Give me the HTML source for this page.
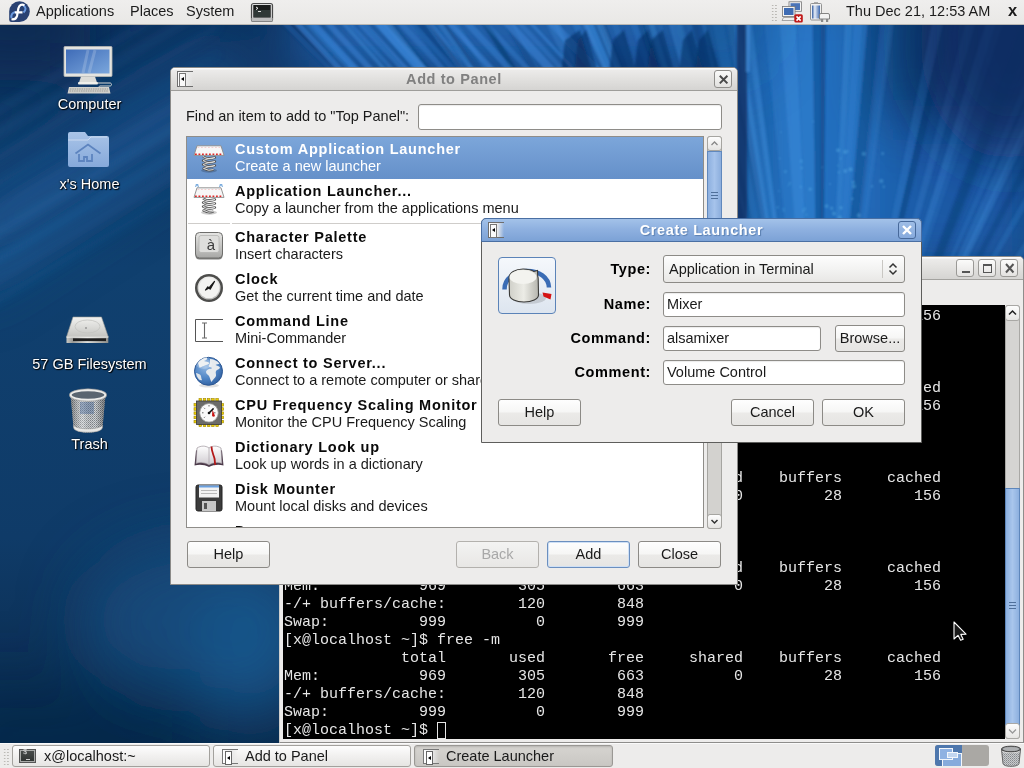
<!DOCTYPE html>
<html><head><meta charset="utf-8">
<style>
*{box-sizing:border-box;margin:0;padding:0}
html,body{width:1024px;height:768px;overflow:hidden}
body{will-change:transform;position:relative;font-family:"Liberation Sans",sans-serif;font-size:14.5px;color:#1a1a1a;background:#0e3561}
.abs{position:absolute}
#wall{position:absolute;left:0;top:0;width:1024px;height:768px;overflow:hidden;background:#0f3a6a}
#toppanel{position:absolute;left:0;top:0;width:1024px;height:25px;background:linear-gradient(#efeeed,#e9e8e6);border-bottom:1px solid #b8b6b2}
#toppanel .t{position:absolute;top:3px;font-size:14.5px;color:#1c1c1c;white-space:nowrap}
.dlabel{position:absolute;width:170px;text-align:center;color:#fff;font-size:14.5px;text-shadow:1px 1px 1px #000,0 0 2px #000;white-space:nowrap}

#term{position:absolute;left:279px;top:256px;width:745px;height:487px;background:#edeceb;border:1px solid #8e8d8b;border-left-color:#cfcecc;border-radius:5px 5px 0 0}
#term-title{position:absolute;left:0;top:0;width:100%;height:23px;background:linear-gradient(#fbfbfb,#fbfbfb 1px,#ecebea 2px,#e3e2e0 45%,#d5d4d2);border-bottom:1px solid #a3a29f;border-radius:4px 4px 0 0}
.tbtn{position:absolute;top:2px;width:18px;height:18px;border:1px solid #9a9996;border-radius:3px;background:linear-gradient(#fbfbfa,#e4e3e1)}
#term-menu{position:absolute;left:0;top:23px;width:100%;height:25px;background:#edeceb}
#term-screen{position:absolute;left:3px;top:48px;width:722px;height:434px;background:#000;overflow:hidden}
#term-screen pre{position:absolute;left:1px;top:3px;font-family:"Liberation Mono",monospace;font-size:15px;line-height:18px;color:#e6e6e6;white-space:pre}
.cur{outline:1px solid #e6e6e6;outline-offset:-1px}
#term-sb{position:absolute;left:725px;top:48px;width:15px;height:434px;background:#d5d4d2;border:1px solid #a9a8a5;border-radius:3px}
.sb-up,.sb-dn{position:absolute;left:-1px;width:15px;height:16px;border:1px solid #a9a8a5;border-radius:3px;background:linear-gradient(#fdfdfd,#e6e5e3)}
.sb-up{top:-1px}.sb-dn{bottom:-1px}
.sb-thumb{position:absolute;left:-1px;width:15px;top:182px;height:238px;border:1px solid #5f87bb;background:linear-gradient(90deg,#8cb0e0,#a9c6ec 50%,#8db0df)}
.win{position:absolute;background:#edeceb;border:1px solid #8b8a88;border-radius:5px 5px 0 0}
.wtitle{position:absolute;left:0;top:0;width:100%;height:23px;background:linear-gradient(#fbfbfb,#fbfbfb 1px,#ecebea 2px,#e3e2e0 45%,#d5d4d2);border-bottom:1px solid #9e9d9a;border-radius:4px 4px 0 0}
.active>.wtitle{background:linear-gradient(#a3c2e9,#8fb1e0 45%,#7ca2d6);border-bottom:1px solid #4a72a8}
.active{border-color:#5e5e5c}
.active>.wtitle{left:-1px;top:-1px;width:calc(100% + 2px);height:24px;border:1px solid #4a6fa3;border-radius:5px 5px 0 0}
.wicon{position:absolute;left:6px;top:3px;width:16px;height:16px;border:1px solid #6e6e6e;border-right:none;background:linear-gradient(90deg,#fff,#ececec 55%,rgba(236,236,236,0))}
.wicon:before{content:"";position:absolute;left:1px;top:1px;width:5px;height:12px;border:1px solid #777;background:#fafafa}
.wicon:after{content:"";position:absolute;left:3px;top:5px;width:0;height:0;border-top:2px solid transparent;border-bottom:2px solid transparent;border-right:3px solid #000}
.wtext{position:absolute;left:0;top:3px;width:100%;text-align:center;font-weight:bold;color:#808080;font-size:14.5px;letter-spacing:.6px}
.active .wtext{color:#fff;text-shadow:1px 1px 1px #5a7fb0}
.wclose{position:absolute;top:2px;width:18px;height:18px;border:1px solid #8f8e8b;border-radius:3px;background:linear-gradient(#fafaf9,#e2e1df)}
.wclose svg{position:absolute;left:0;top:0}
.active .wclose{border-color:#47699a;background:linear-gradient(#9ebde6,#86aadd)}
.lbl{position:absolute;white-space:nowrap;font-size:14.5px;color:#1a1a1a}
.entry{position:absolute;background:#fff;border:1px solid #8e8c88;border-radius:3px;box-shadow:inset 0 1px 1px rgba(0,0,0,.08);font-size:14.5px;white-space:nowrap;padding-left:3px;line-height:23px;color:#1a1a1a}
.btn{position:absolute;height:27px;border:1px solid #8c8a86;border-radius:3px;background:linear-gradient(#fefefe,#f6f6f5 48%,#ebeae8 52%,#e6e5e3);text-align:center;line-height:25px;font-size:14.5px;color:#1a1a1a;white-space:nowrap}
.btn.dis{color:#a8a8a8;border-color:#b3b1ad;background:linear-gradient(#f3f3f2,#e8e7e5)}
.btn.def{border-color:#6b8fbf;box-shadow:inset 0 0 0 1px #cfe0f5}
#atplist{position:absolute;left:15px;top:68px;width:518px;height:392px;background:#fff;border:1px solid #8f8d89;overflow:hidden}
.row{position:absolute;left:0;width:516px;height:42px}
.row.sel{background:linear-gradient(#7ca6da,#6590c9);color:#fff}
.ric{position:absolute;left:6px;top:5px}
.rt{position:absolute;left:48px;top:4px;font-weight:bold;color:#0a0a0a;font-size:14.5px;letter-spacing:.75px;white-space:nowrap}
.rd{position:absolute;left:48px;top:21px;font-size:14.5px;white-space:nowrap}
.row.sel .rt,.row.sel .rd{color:#fff}
.sep{position:absolute;height:1px;background:#cfcdca}
.vsb{position:absolute;width:15px;background:#d3d2cf;border:1px solid #a6a5a1;border-radius:3px}
.sb-up2,.sb-dn2{position:absolute;left:-1px;width:15px;height:15px;border:1px solid #a6a5a1;border-radius:3px;background:linear-gradient(#fdfdfd,#e5e4e2)}
.sb-up2 svg,.sb-dn2 svg{position:absolute;left:0;top:0}
.sb-up2{top:-1px}.sb-dn2{bottom:-1px}
.sb-thumb2{position:absolute;left:-1px;width:15px;border:1px solid #6088bd;background:linear-gradient(90deg,#8db0df,#a6c3eb 50%,#8caedd)}
.grip{position:absolute;left:3px;width:7px;height:7px;border-top:1px solid #4f6f9a;border-bottom:1px solid #4f6f9a}
.grip:after{content:"";position:absolute;left:0;top:2px;width:7px;height:1px;background:#4f6f9a}
.lbl.b{font-weight:bold;letter-spacing:.6px;color:#000}
.iconbtn{position:absolute;border:1px solid #5b83b8;border-radius:4px;background:linear-gradient(#f5f8fc,#dde5ef)}
.combo{position:absolute;border:1px solid #8c8a86;border-radius:3px;background:linear-gradient(#fdfdfd,#f3f3f2 50%,#e8e7e5);font-size:14.5px;line-height:26px;padding-left:5px;white-space:nowrap;color:#1a1a1a}
.csep{position:absolute;left:218px;top:4px;width:1px;height:18px;background:#c9c7c3}
#botpanel{position:absolute;left:0;top:743px;width:1024px;height:25px;background:#edeceb;border-top:1px solid #fafafa}
.handle{position:absolute;width:7px;height:18px;background-image:radial-gradient(circle at 1.5px 1.5px,#bcbab6 .8px,transparent 1px);background-size:3.3px 3px}
.task{position:absolute;top:1px;height:22px;border:1px solid #a3a19d;border-radius:3px;background:linear-gradient(#fdfdfd,#f1f0ef 50%,#e6e5e3)}
.task.act{background:linear-gradient(#d6d4d0,#c9c7c3);border-color:#9a9894;box-shadow:inset 0 1px 2px rgba(0,0,0,.15)}
.task span{position:absolute;top:2px;font-size:14.5px;color:#1a1a1a;white-space:nowrap}
.ticon{position:absolute;left:6px;top:3px;width:17px;height:14px}
.termico{border:1px solid #555;background:linear-gradient(#4a4e4c,#2e3230);box-shadow:inset 0 0 0 1px #a8aaa8}
.termico:before{content:"$";position:absolute;left:3px;top:-2px;font-size:7px;color:#ddd;font-family:"Liberation Mono"}
.termico:after{content:"";position:absolute;left:6px;top:9px;width:4px;height:1px;background:#ccc}
.wico{border:1px solid #777;border-right:none;width:16px;height:15px;top:3px;left:8px;background:linear-gradient(90deg,#fff,#e8e8e8 55%,rgba(230,230,230,0))}
.wico:before{content:"";position:absolute;left:2px;top:1px;width:5px;height:12px;border:1px solid #666;background:#fff}
.wico:after{content:"";position:absolute;left:4px;top:6px;width:0;height:0;border-top:2px solid transparent;border-bottom:2px solid transparent;border-right:3px solid #000}
</style></head><body>
<svg width="0" height="0" style="position:absolute"><defs>
<linearGradient id="gkey" x1="0" y1="0" x2="0" y2="1"><stop offset="0" stop-color="#f0f0ee"/><stop offset="1" stop-color="#b8b8b6"/></linearGradient>
<radialGradient id="gglobe" cx=".4" cy=".35" r=".75"><stop offset="0" stop-color="#8fb6e2"/><stop offset=".55" stop-color="#4f84c4"/><stop offset="1" stop-color="#2a5898"/></radialGradient>
<linearGradient id="gknob" x1="0" y1="0" x2="1" y2="0"><stop offset="0" stop-color="#cfcfc8"/><stop offset=".5" stop-color="#ececE6"/><stop offset="1" stop-color="#b5b5ae"/></linearGradient>
<linearGradient id="gscreen" x1="0" y1="0" x2="1" y2="1"><stop offset="0" stop-color="#3f6cb8"/><stop offset="1" stop-color="#7aa6dc"/></linearGradient>
<linearGradient id="gfolder" x1="0" y1="0" x2="0" y2="1"><stop offset="0" stop-color="#a9c4e8"/><stop offset="1" stop-color="#86a9da"/></linearGradient>
<linearGradient id="ghdd" x1="0" y1="0" x2="0" y2="1"><stop offset="0" stop-color="#f2f2f0"/><stop offset="1" stop-color="#c4c4c0"/></linearGradient>
<linearGradient id="gtrash" x1="0" y1="0" x2="1" y2="0"><stop offset="0" stop-color="#9aa0a4"/><stop offset=".4" stop-color="#e8eaec"/><stop offset="1" stop-color="#8e9296"/></linearGradient>
<linearGradient id="gbatt" x1="0" y1="0" x2="1" y2="0"><stop offset="0" stop-color="#2f5aa0"/><stop offset=".35" stop-color="#e8eef8"/><stop offset="1" stop-color="#3a66ad"/></linearGradient>
<linearGradient id="gkey2" x1="0" y1="0" x2="0" y2="1"><stop offset="0" stop-color="#e6e6e4"/><stop offset="1" stop-color="#a8a8a6"/></linearGradient>
<linearGradient id="gpage" x1="0" y1="0" x2="0" y2="1"><stop offset="0" stop-color="#ffffff"/><stop offset="1" stop-color="#cfcbd0"/></linearGradient>
<linearGradient id="ghddf" x1="0" y1="0" x2="1" y2="0"><stop offset="0" stop-color="#c8c8c4"/><stop offset=".15" stop-color="#9a9a96"/><stop offset=".5" stop-color="#e0e0dc"/><stop offset="1" stop-color="#8e8e8a"/></linearGradient>
</defs></svg>
<div id="wall"><svg width="1024" height="768" viewBox="0 0 1024 768" style="position:absolute;left:0;top:0">
<defs>
<filter id="b30" x="-50%" y="-50%" width="200%" height="200%"><feGaussianBlur stdDeviation="30"/></filter>
<filter id="b12" x="-50%" y="-50%" width="200%" height="200%"><feGaussianBlur stdDeviation="12"/></filter>
<filter id="b4" x="-50%" y="-50%" width="200%" height="200%"><feGaussianBlur stdDeviation="4"/></filter>
<filter id="b1" x="-50%" y="-50%" width="200%" height="200%"><feGaussianBlur stdDeviation="1.2"/></filter>
<linearGradient id="wv" x1="0" y1="0" x2="0" y2="1">
<stop offset="0" stop-color="#0c2f5c"/><stop offset=".35" stop-color="#10406f"/><stop offset=".7" stop-color="#0f3b68"/><stop offset="1" stop-color="#0a2849"/>
</linearGradient>
</defs>
<rect width="1024" height="768" fill="url(#wv)"/>
<g filter="url(#b30)">
<rect x="-60" y="-40" width="150" height="120" fill="#0a2a52"/>
<path d="M-40 300 L240 120 L240 30 L-40 200Z" fill="#1b5590" opacity=".7"/>
<rect x="300" y="-20" width="460" height="100" fill="#2162ad"/>
<rect x="740" y="-20" width="140" height="300" fill="#2470c0"/>
<rect x="880" y="120" width="160" height="160" fill="#1a5aa6"/>
<rect x="920" y="-30" width="130" height="140" fill="#0b3470"/>
<ellipse cx="200" cy="620" rx="120" ry="80" fill="#144a7c" opacity=".9"/><ellipse cx="250" cy="650" rx="60" ry="70" fill="#1a5a92" opacity=".7"/>
<rect x="-50" y="680" width="250" height="120" fill="#0a2647" opacity=".6"/>
</g>

<g filter="url(#b4)">
<path d="M-20 117 L220 -23 L220 -18 L-20 125Z" fill="#3b82cc" opacity="0.17"/>
<path d="M-20 137 L220 -3 L220 5 L-20 150Z" fill="#3b82cc" opacity="0.13"/>
<path d="M-20 161 L220 21 L220 29 L-20 173Z" fill="#3b82cc" opacity="0.09"/>
<path d="M-20 191 L220 51 L220 55 L-20 198Z" fill="#3b82cc" opacity="0.09"/>
<path d="M-20 215 L220 75 L220 85 L-20 231Z" fill="#3b82cc" opacity="0.10"/>
<path d="M-20 236 L220 96 L220 105 L-20 249Z" fill="#3b82cc" opacity="0.21"/>
<path d="M-20 265 L220 125 L220 132 L-20 276Z" fill="#3b82cc" opacity="0.22"/>
<path d="M-20 281 L220 141 L220 152 L-20 297Z" fill="#3b82cc" opacity="0.12"/>
<path d="M-20 306 L220 166 L220 171 L-20 314Z" fill="#3b82cc" opacity="0.12"/>
</g>
<g filter="url(#b1)">
<path d="M820 560 L365 0 L377 0Z" fill="#0e3a74" opacity="0.33"/>
<path d="M820 560 L622 0 L634 0Z" fill="#2f7ccc" opacity="0.33"/>
<path d="M820 560 L637 0 L647 0Z" fill="#3d8ad8" opacity="0.41"/>
<path d="M820 560 L629 0 L641 0Z" fill="#0e3a74" opacity="0.39"/>
<path d="M820 560 L948 0 L958 0Z" fill="#0c3368" opacity="0.35"/>
<path d="M820 560 L892 0 L897 0Z" fill="#4a98e6" opacity="0.18"/>
<path d="M820 560 L575 0 L590 0Z" fill="#3d8ad8" opacity="0.48"/>
<path d="M820 560 L693 0 L697 0Z" fill="#0e3a74" opacity="0.39"/>
<path d="M820 560 L696 0 L700 0Z" fill="#3d8ad8" opacity="0.38"/>
<path d="M820 560 L392 0 L400 0Z" fill="#0e3a74" opacity="0.42"/>
<path d="M820 560 L937 0 L948 0Z" fill="#3d8ad8" opacity="0.27"/>
<path d="M820 560 L993 0 L1003 0Z" fill="#4a98e6" opacity="0.29"/>
<path d="M820 560 L364 0 L372 0Z" fill="#4a98e6" opacity="0.45"/>
<path d="M820 560 L436 0 L442 0Z" fill="#2f7ccc" opacity="0.37"/>
<path d="M820 560 L1108 0 L1119 0Z" fill="#0c3368" opacity="0.26"/>
<path d="M820 560 L1180 0 L1193 0Z" fill="#4a98e6" opacity="0.19"/>
<path d="M820 560 L673 0 L677 0Z" fill="#3d8ad8" opacity="0.33"/>
<path d="M820 560 L650 0 L655 0Z" fill="#2f7ccc" opacity="0.23"/>
<path d="M820 560 L259 0 L275 0Z" fill="#0c3368" opacity="0.49"/>
<path d="M820 560 L1083 0 L1094 0Z" fill="#4a98e6" opacity="0.30"/>
<path d="M820 560 L572 0 L577 0Z" fill="#4a98e6" opacity="0.42"/>
<path d="M820 560 L708 0 L719 0Z" fill="#2f7ccc" opacity="0.31"/>
<path d="M820 560 L855 0 L870 0Z" fill="#2f7ccc" opacity="0.46"/>
<path d="M820 560 L420 0 L430 0Z" fill="#3d8ad8" opacity="0.36"/>
<path d="M820 560 L467 0 L474 0Z" fill="#0c3368" opacity="0.54"/>
<path d="M820 560 L742 0 L749 0Z" fill="#4a98e6" opacity="0.42"/>
<path d="M820 560 L1136 0 L1147 0Z" fill="#2f7ccc" opacity="0.29"/>
<path d="M820 560 L869 0 L887 0Z" fill="#0e3a74" opacity="0.32"/>
<path d="M820 560 L561 0 L569 0Z" fill="#2f7ccc" opacity="0.45"/>
<path d="M820 560 L680 0 L695 0Z" fill="#2f7ccc" opacity="0.24"/>
<path d="M820 560 L723 0 L730 0Z" fill="#0e3a74" opacity="0.54"/>
<path d="M820 560 L778 0 L795 0Z" fill="#4a98e6" opacity="0.42"/>
<path d="M820 560 L347 0 L365 0Z" fill="#2f7ccc" opacity="0.47"/>
<path d="M820 560 L340 0 L356 0Z" fill="#0e3a74" opacity="0.35"/>
<path d="M820 560 L257 0 L272 0Z" fill="#0c3368" opacity="0.46"/>
<path d="M820 560 L1033 0 L1050 0Z" fill="#0c3368" opacity="0.19"/>
<path d="M820 560 L578 0 L593 0Z" fill="#2f7ccc" opacity="0.33"/>
<path d="M820 560 L855 0 L864 0Z" fill="#2f7ccc" opacity="0.44"/>
<path d="M820 560 L796 0 L812 0Z" fill="#3d8ad8" opacity="0.36"/>
<path d="M820 560 L542 0 L548 0Z" fill="#3d8ad8" opacity="0.25"/>
<path d="M820 560 L730 0 L742 0Z" fill="#2f7ccc" opacity="0.36"/>
<path d="M820 560 L762 0 L778 0Z" fill="#3d8ad8" opacity="0.28"/>
<path d="M820 560 L584 0 L596 0Z" fill="#0c3368" opacity="0.43"/>
<path d="M820 560 L583 0 L594 0Z" fill="#0e3a74" opacity="0.45"/>
<path d="M820 560 L586 0 L594 0Z" fill="#4a98e6" opacity="0.48"/>
<path d="M820 560 L972 0 L982 0Z" fill="#4a98e6" opacity="0.20"/>
<path d="M820 560 L409 0 L414 0Z" fill="#0c3368" opacity="0.57"/>
<path d="M820 560 L723 0 L736 0Z" fill="#3d8ad8" opacity="0.49"/>
<path d="M820 560 L883 0 L893 0Z" fill="#2f7ccc" opacity="0.27"/>
<path d="M820 560 L534 0 L545 0Z" fill="#3d8ad8" opacity="0.31"/>
<path d="M820 560 L491 0 L500 0Z" fill="#2f7ccc" opacity="0.21"/>
<path d="M820 560 L662 0 L674 0Z" fill="#3d8ad8" opacity="0.49"/>
<path d="M820 560 L426 0 L430 0Z" fill="#0e3a74" opacity="0.53"/>
<path d="M820 560 L812 0 L826 0Z" fill="#0e3a74" opacity="0.34"/>
<path d="M820 560 L1073 0 L1087 0Z" fill="#3d8ad8" opacity="0.26"/>
<path d="M820 560 L846 0 L854 0Z" fill="#3d8ad8" opacity="0.44"/>
<path d="M820 560 L821 0 L826 0Z" fill="#0e3a74" opacity="0.30"/>
<path d="M820 560 L1029 0 L1045 0Z" fill="#0c3368" opacity="0.27"/>
<path d="M820 560 L320 0 L326 0Z" fill="#3d8ad8" opacity="0.48"/>
<path d="M820 560 L602 0 L609 0Z" fill="#2f7ccc" opacity="0.25"/>
<path d="M820 560 L258 0 L266 0Z" fill="#2f7ccc" opacity="0.35"/>
<path d="M820 560 L1060 0 L1068 0Z" fill="#2f7ccc" opacity="0.27"/>
<path d="M820 560 L574 0 L589 0Z" fill="#2f7ccc" opacity="0.29"/>
<path d="M820 560 L400 0 L407 0Z" fill="#0c3368" opacity="0.42"/>
<path d="M820 560 L284 0 L289 0Z" fill="#2f7ccc" opacity="0.46"/>
<path d="M820 560 L280 0 L294 0Z" fill="#2f7ccc" opacity="0.40"/>
<path d="M820 560 L408 0 L416 0Z" fill="#3d8ad8" opacity="0.28"/>
<path d="M820 560 L490 0 L498 0Z" fill="#0e3a74" opacity="0.37"/>
<path d="M820 560 L1002 0 L1011 0Z" fill="#4a98e6" opacity="0.14"/>
<path d="M820 560 L686 0 L693 0Z" fill="#0c3368" opacity="0.38"/>
</g>
<g filter="url(#b1)">
<path d="M290 20 L298 20 L346 72 L338 72Z" fill="#3f8ce0" opacity="0.53"/>
<path d="M307 20 L315 20 L363 72 L355 72Z" fill="#3f8ce0" opacity="0.43"/>
<path d="M321 20 L329 20 L377 72 L369 72Z" fill="#3f8ce0" opacity="0.44"/>
<path d="M344 20 L349 20 L397 72 L392 72Z" fill="#3f8ce0" opacity="0.34"/>
<path d="M354 20 L364 20 L412 72 L402 72Z" fill="#3f8ce0" opacity="0.46"/>
<path d="M370 20 L382 20 L430 72 L418 72Z" fill="#3f8ce0" opacity="0.54"/>
<path d="M394 20 L402 20 L450 72 L442 72Z" fill="#3f8ce0" opacity="0.30"/>
<path d="M404 20 L412 20 L460 72 L452 72Z" fill="#3f8ce0" opacity="0.27"/>
<path d="M423 20 L429 20 L477 72 L471 72Z" fill="#3f8ce0" opacity="0.26"/>
<path d="M443 20 L450 20 L498 72 L491 72Z" fill="#3f8ce0" opacity="0.50"/>
<path d="M460 20 L469 20 L517 72 L508 72Z" fill="#3f8ce0" opacity="0.40"/>
<path d="M479 20 L486 20 L534 72 L527 72Z" fill="#3f8ce0" opacity="0.33"/>
<path d="M499 20 L511 20 L559 72 L547 72Z" fill="#3f8ce0" opacity="0.50"/>
<path d="M513 20 L520 20 L568 72 L561 72Z" fill="#3f8ce0" opacity="0.32"/>
<path d="M526 20 L530 20 L578 72 L574 72Z" fill="#3f8ce0" opacity="0.48"/>
<path d="M544 20 L555 20 L603 72 L592 72Z" fill="#3f8ce0" opacity="0.37"/>
<path d="M565 40 L580 30 L592 72 L561 72Z" fill="#0a2c5e" opacity=".55"/>
<path d="M578 40 L586 30 L598 72 L574 72Z" fill="#0a2c5e" opacity=".55"/>
<path d="M613 40 L624 30 L636 72 L609 72Z" fill="#0a2c5e" opacity=".55"/>
<path d="M638 40 L648 30 L660 72 L634 72Z" fill="#0a2c5e" opacity=".55"/>
<path d="M651 40 L663 30 L675 72 L647 72Z" fill="#0a2c5e" opacity=".55"/>
<path d="M683 40 L692 30 L704 72 L679 72Z" fill="#0a2c5e" opacity=".55"/>
<path d="M699 40 L708 30 L720 72 L695 72Z" fill="#0a2c5e" opacity=".55"/>
</g>
<g filter="url(#b30)"><ellipse cx="1010" cy="40" rx="90" ry="120" fill="#0a2c60" opacity=".8"/><ellipse cx="720" cy="30" rx="50" ry="40" fill="#0c3466" opacity=".4"/></g>
<g filter="url(#b1)"><rect x="737" y="20" width="10" height="240" fill="#0b2f62" opacity=".75"/><rect x="746" y="24" width="4" height="48" fill="#4a90dc" opacity=".6"/></g>
<g opacity=".35" filter="url(#b1)">
<circle cx="823.8" cy="235.1" r="2.1" fill="#6cc0f0"/>
<circle cx="824.3" cy="229.2" r="2.1" fill="#6cc0f0"/>
<circle cx="864.8" cy="250.9" r="1.7" fill="#6cc0f0"/>
<circle cx="848.7" cy="246.4" r="1.0" fill="#6cc0f0"/>
<circle cx="831.7" cy="208.2" r="1.6" fill="#6cc0f0"/>
<circle cx="847.6" cy="151.4" r="1.1" fill="#6cc0f0"/>
<circle cx="837.6" cy="231.9" r="1.0" fill="#6cc0f0"/>
<circle cx="884.4" cy="235.3" r="1.0" fill="#6cc0f0"/>
<circle cx="838.1" cy="150.2" r="2.0" fill="#6cc0f0"/>
<circle cx="838.7" cy="172.4" r="1.1" fill="#6cc0f0"/>
<circle cx="881.3" cy="181.0" r="2.1" fill="#6cc0f0"/>
<circle cx="841.0" cy="207.7" r="1.7" fill="#6cc0f0"/>
<circle cx="857.0" cy="223.9" r="2.2" fill="#6cc0f0"/>
<circle cx="886.1" cy="245.6" r="1.2" fill="#6cc0f0"/>
<circle cx="838.0" cy="165.6" r="0.9" fill="#6cc0f0"/>
<circle cx="853.3" cy="182.2" r="1.6" fill="#6cc0f0"/>
<circle cx="872.1" cy="186.2" r="1.2" fill="#6cc0f0"/>
<circle cx="845.6" cy="237.6" r="1.5" fill="#6cc0f0"/>
<circle cx="836.7" cy="225.4" r="0.9" fill="#6cc0f0"/>
<circle cx="863.9" cy="254.3" r="0.8" fill="#6cc0f0"/>
<circle cx="845.0" cy="151.9" r="1.9" fill="#6cc0f0"/>
<circle cx="810.2" cy="189.2" r="1.6" fill="#6cc0f0"/>
<circle cx="850.6" cy="169.4" r="2.1" fill="#6cc0f0"/>
<circle cx="845.3" cy="171.0" r="1.9" fill="#6cc0f0"/>
<circle cx="883.8" cy="186.8" r="1.3" fill="#6cc0f0"/>
<circle cx="826.6" cy="206.1" r="1.9" fill="#6cc0f0"/>
<circle cx="868.3" cy="235.3" r="2.0" fill="#6cc0f0"/>
<circle cx="863.8" cy="153.9" r="2.1" fill="#6cc0f0"/>
<circle cx="858.8" cy="215.4" r="2.1" fill="#6cc0f0"/>
<circle cx="853.9" cy="186.4" r="2.1" fill="#6cc0f0"/>
<circle cx="830.0" cy="183.9" r="1.0" fill="#6cc0f0"/>
<circle cx="840.6" cy="158.4" r="1.0" fill="#6cc0f0"/>
<circle cx="822.3" cy="167.3" r="0.9" fill="#6cc0f0"/>
<circle cx="788.5" cy="255.6" r="1.5" fill="#6cc0f0"/>
<circle cx="834.0" cy="213.6" r="2.0" fill="#6cc0f0"/>
<circle cx="852.4" cy="198.8" r="1.4" fill="#6cc0f0"/>
<circle cx="882.6" cy="153.5" r="1.5" fill="#6cc0f0"/>
<circle cx="858.7" cy="239.7" r="1.0" fill="#6cc0f0"/>
<circle cx="839.9" cy="217.5" r="1.9" fill="#6cc0f0"/>
<circle cx="801.3" cy="161.4" r="1.4" fill="#6cc0f0"/>
<circle cx="801.4" cy="160.4" r="1.1" fill="#5ab0e8"/>
<circle cx="805.6" cy="256.9" r="1.5" fill="#5ab0e8"/>
<circle cx="800.9" cy="186.9" r="1.3" fill="#5ab0e8"/>
<circle cx="788.3" cy="185.6" r="0.9" fill="#5ab0e8"/>
<circle cx="785.4" cy="171.6" r="1.6" fill="#5ab0e8"/>
<circle cx="793.2" cy="251.5" r="1.2" fill="#5ab0e8"/>
<circle cx="780.9" cy="132.2" r="0.9" fill="#5ab0e8"/>
<circle cx="790.0" cy="227.1" r="1.5" fill="#5ab0e8"/>
<circle cx="778.7" cy="226.2" r="1.3" fill="#5ab0e8"/>
<circle cx="803.4" cy="211.0" r="1.4" fill="#5ab0e8"/>
<circle cx="779.8" cy="158.5" r="1.1" fill="#5ab0e8"/>
<circle cx="801.8" cy="225.5" r="1.3" fill="#5ab0e8"/>
<circle cx="783.4" cy="209.0" r="1.2" fill="#5ab0e8"/>
<circle cx="813.2" cy="121.6" r="1.1" fill="#5ab0e8"/>
<circle cx="789.9" cy="183.4" r="1.4" fill="#5ab0e8"/>
<circle cx="804.9" cy="208.7" r="1.4" fill="#5ab0e8"/>
<circle cx="781.7" cy="221.1" r="1.4" fill="#5ab0e8"/>
<circle cx="801.7" cy="168.0" r="1.4" fill="#5ab0e8"/>
<circle cx="800.4" cy="253.7" r="1.6" fill="#5ab0e8"/>
<circle cx="778.9" cy="191.0" r="1.1" fill="#5ab0e8"/>
<circle cx="799.6" cy="248.4" r="1.1" fill="#5ab0e8"/>
<circle cx="806.5" cy="214.7" r="1.3" fill="#5ab0e8"/>
<circle cx="789.2" cy="226.9" r="1.2" fill="#5ab0e8"/>
<circle cx="783.9" cy="211.2" r="1.0" fill="#5ab0e8"/>
<circle cx="777.7" cy="207.3" r="1.3" fill="#5ab0e8"/>
</g>
</svg></div>

<div id="toppanel">
  <svg class="abs" style="left:8px;top:1px" width="23" height="22" viewBox="8 1 23 22">
    <path d="M9.2 11.6A10.3 10.3 0 1 1 19.5 21.9H11.4Q9.2 21.9 9.2 19.7Z" fill="#294172"/>
    <path d="M23.5 5.5Q27.5 8.5 23.5 12.5M15.5 12Q10.5 13 11.5 18" stroke="#6a9ae0" stroke-width="2" fill="none"/>
    <path d="M24.5 5.2Q19.8 3.2 18.4 8.2L17 16Q16 20 11.5 19.2M14.8 12.4H22.5" stroke="#fff" stroke-width="2.2" fill="none"/>
  </svg>
  <div class="t" style="left:36px">Applications</div>
  <div class="t" style="left:130px">Places</div>
  <div class="t" style="left:186px">System</div>
  <svg class="abs" style="left:250px;top:2px" width="25" height="21" viewBox="250 2 25 21">
    <rect x="251.5" y="3.5" width="21" height="18" rx="2" fill="#dcdcdc" stroke="#4a4a4a" stroke-width="1.2"/>
    <rect x="253.3" y="5" width="17.4" height="12.6" fill="#1a1c1b"/>
    <rect x="254" y="10" width="16" height="7" fill="#3b4541" opacity=".7"/>
    <path d="M256 7l2 1.3-2 1.3" stroke="#eee" stroke-width="1" fill="none"/>
    <path d="M258 11.5h3" stroke="#ddd" stroke-width="1"/>
    <rect x="251.5" y="18" width="21" height="3.5" fill="#bdbdbd"/>
  </svg>
  <div class="abs" style="left:771px;top:4px;width:6px;height:17px;background-image:radial-gradient(circle at 1.5px 1.5px,#b9b7b3 .8px,transparent 1px);background-size:3.3px 3px"></div>
  <svg class="abs" style="left:780px;top:0" width="52" height="24" viewBox="780 0 52 24">
    <rect x="789" y="1.8" width="12.5" height="9.5" fill="#f4f4f4" stroke="#777" stroke-width=".8"/>
    <rect x="790.5" y="3.2" width="9.5" height="6.8" fill="#4a74b8"/>
    <rect x="782.5" y="6.5" width="12.5" height="10" fill="#f4f4f4" stroke="#777" stroke-width=".8"/>
    <rect x="784" y="8" width="9.5" height="7" fill="#3e6cb4"/>
    <path d="M782 20.5l1.5-3h12l1.5 3z" fill="#eee" stroke="#888" stroke-width=".7"/>
    <rect x="794.3" y="14.2" width="8.5" height="8.4" rx="1.5" fill="#c01818"/>
    <path d="M796.5 16.4l4.2 4.2M800.7 16.4l-4.2 4.2" stroke="#fff" stroke-width="1.6"/>
    <rect x="810.5" y="3.5" width="11" height="16.5" rx="1" fill="#f0f0f0" stroke="#888" stroke-width=".9"/>
    <rect x="814" y="2.2" width="4" height="1.6" fill="#999"/>
    <rect x="812" y="5.5" width="8" height="13" fill="url(#gbatt)"/>
    <path d="M819.5 15a1.5 1.5 0 0 1 1.5-1.5h7a1.5 1.5 0 0 1 1.5 1.5v4h-10z" fill="#f2f2f2" stroke="#777" stroke-width=".9"/>
    <rect x="821" y="19" width="2.2" height="3" fill="#888"/><rect x="826" y="19" width="2.2" height="3" fill="#888"/>
  </svg>
  <div class="t" style="left:846px">Thu Dec 21, 12:53 AM</div>
  <div class="t" style="left:1008px;top:1px;font-weight:bold;font-size:16.5px">x</div>
</div>
</div>



<svg class="abs" style="left:60px;top:44px" width="56" height="52" viewBox="60 44 56 52">
  <rect x="64" y="46.5" width="48" height="30" rx="1" fill="#e4e4e0" stroke="#b8b8b2" stroke-width=".8"/>
  <rect x="66" y="49.5" width="43.5" height="24" fill="url(#gscreen)"/>
  <path d="M88 50l-5 23M95 50l-6 23" stroke="rgba(255,255,255,.18)" stroke-width="3"/>
  <path d="M81 76.5h14l2 6h-18z" fill="#dcdcd8"/>
  <rect x="78" y="82" width="20" height="2.5" rx="1" fill="#f0f0ec"/>
  <path d="M97 83h13c2 0 2 3 0 3h-10c-1 0-1 1-1 2" stroke="#d8d8d4" stroke-width="1" fill="none"/>
  <path d="M69 87h40l1.5 6.5h-43z" fill="#d0d0cc"/>
  <path d="M70 89h38M69.5 91h39" stroke="#8a8a86" stroke-width=".8" stroke-dasharray="1.5 .8"/>
</svg>
<svg class="abs" style="left:64px;top:128px" width="48" height="44" viewBox="64 128 48 44">
  <path d="M68 134a2 2 0 0 1 2-2h15l3 4h19a2 2 0 0 1 2 2v27a2 2 0 0 1-2 2h-37a2 2 0 0 1-2-2z" fill="url(#gfolder)"/>
  <path d="M68 140h20l3-3h16" stroke="rgba(255,255,255,.45)" stroke-width="1" fill="none"/>
  <path d="M75.5 153.5l12.5-9 12.5 9" stroke="#5d84bf" stroke-width="1.8" fill="none"/>
  <path d="M79 154v7h5v-4h3v4h5v-7" stroke="#5d84bf" stroke-width="1.8" fill="none"/>
</svg>
<svg class="abs" style="left:62px;top:312px" width="52" height="36" viewBox="62 312 52 36">
  <path d="M73 317h28.5l6.8 20H66.5z" fill="url(#ghdd)" stroke="#9a9a96" stroke-width=".6"/>
  <ellipse cx="87.5" cy="326.5" rx="12.5" ry="6.5" fill="none" stroke="#c4c4c0" stroke-width=".8"/>
  <circle cx="86" cy="328" r="1" fill="#999"/>
  <rect x="66.5" y="337" width="41.8" height="6" fill="url(#ghddf)"/>
  <rect x="73" y="338.3" width="33" height="2.8" fill="#1e1e1e"/>
  <rect x="66.5" y="336.6" width="41.8" height="1" fill="#f4f4f2"/>
</svg>
<svg class="abs" style="left:66px;top:386px" width="44" height="50" viewBox="66 386 44 50">
  <defs><pattern id="mesh2" width="2" height="2" patternUnits="userSpaceOnUse"><rect width="2" height="2" fill="#d4d7da"/><rect width="1" height="1" fill="#7f8488"/><rect x="1" y="1" width="1" height="1" fill="#9da1a5"/></pattern>
  <linearGradient id="tshade" x1="0" y1="0" x2="1" y2="0"><stop offset="0" stop-color="#000" stop-opacity=".35"/><stop offset=".35" stop-color="#fff" stop-opacity=".25"/><stop offset=".7" stop-color="#000" stop-opacity="0"/><stop offset="1" stop-color="#000" stop-opacity=".4"/></linearGradient></defs>
  <path d="M70.5 395l3 32.5c.5 3.5 6.5 5 14.5 5s14-1.5 14.5-5l3-32.5z" fill="url(#mesh2)"/>
  <path d="M70.5 395l3 32.5c.5 3.5 6.5 5 14.5 5s14-1.5 14.5-5l3-32.5z" fill="url(#tshade)"/>
  <rect x="80" y="402" width="14" height="12" fill="rgba(40,80,140,.35)"/>
  <path d="M73.3 425c2 2.5 7 3.8 14.7 3.8s12.7-1.3 14.7-3.8l-.4 3c-.8 2.8-6 4.3-14.3 4.3s-13.5-1.5-14.3-4.3z" fill="#e8e8e6" stroke="#888" stroke-width=".5"/>
  <ellipse cx="88" cy="395" rx="17.5" ry="5" fill="#5a6570" stroke="#ececea" stroke-width="2.4"/>
  <ellipse cx="88" cy="395" rx="18.8" ry="6.2" fill="none" stroke="#888" stroke-width=".6"/>
</svg>
<div class="dlabel" style="left:4.5px;top:96px">Computer</div>
<div class="dlabel" style="left:4.5px;top:176px">x's Home</div>
<div class="dlabel" style="left:4.5px;top:356px">57 GB Filesystem</div>
<div class="dlabel" style="left:4.5px;top:436px">Trash</div>

<div id="term">
  <div id="term-title"><div class="tbtn" style="left:676px"><div style="position:absolute;left:4.5px;top:10.5px;width:8px;height:2px;background:#555"></div></div><div class="tbtn" style="left:698px"><div style="position:absolute;left:4px;top:4px;width:8.5px;height:8.5px;border:1.3px solid #555;border-top-width:2.5px"></div></div><div class="tbtn" style="left:720px"><svg width="18" height="18" viewBox="0 0 18 18" style="position:absolute;left:-1px;top:-1px"><path d="M6 5l7.5 8.5M13.5 5L6 13.5" stroke="#555" stroke-width="2"/></svg></div></div>
  <div id="term-menu"></div>
  <div id="term-screen"><pre>Mem:           969        305        663          0         28        156
-/+ buffers/cache:        120        848
Swap:          999          0        999
[x@localhost ~]$ free -m
             total       used       free     shared    buffers     cached
Mem:           969        305        663          0         28        156
-/+ buffers/cache:        120        848
Swap:          999          0        999
[x@localhost ~]$ free -m
             total       used       free     shared    buffers     cached
Mem:           969        305        663          0         28        156
-/+ buffers/cache:        120        848
Swap:          999          0        999
[x@localhost ~]$ free -m
             total       used       free     shared    buffers     cached
Mem:           969        305        663          0         28        156
-/+ buffers/cache:        120        848
Swap:          999          0        999
[x@localhost ~]$ free -m
             total       used       free     shared    buffers     cached
Mem:           969        305        663          0         28        156
-/+ buffers/cache:        120        848
Swap:          999          0        999
[x@localhost ~]$ <span class="cur"> </span></pre></div>
  <div id="term-sb"><div class="sb-up"><svg width="13" height="14" viewBox="0 0 13 14" style="position:absolute;left:0;top:0"><path d="M3 8.5l3.5-3.5 3.5 3.5" stroke="#222" stroke-width="1.5" fill="none"/></svg></div><div class="sb-thumb"><div class="grip" style="top:113px"></div></div><div class="sb-dn"><svg width="13" height="14" viewBox="0 0 13 14" style="position:absolute;left:0;top:0"><path d="M3 5.5l3.5 3.5 3.5-3.5" stroke="#999" stroke-width="1.3" fill="none"/></svg></div></div>
</div>

<div id="atp" class="win inactive" style="left:170px;top:67px;width:568px;height:518px">
  <div class="wtitle"><div class="wicon"></div><div class="wtext">Add to Panel</div><div class="wclose" style="left:543px"><svg width="17" height="17" viewBox="0 0 17 17"><path d="M4.8 4.8l7.6 7.6M12.4 4.8l-7.6 7.6" stroke="#4a4a4a" stroke-width="2"/></svg></div></div>
  <div class="lbl" style="left:15px;top:40px">Find an item to add to "Top Panel":</div>
  <div class="entry" style="left:247px;top:36px;width:304px;height:26px"></div>
  <div id="atplist">
<div class="row sel" style="top:0px"><svg class="ric" width="32" height="32" viewBox="0 0 32 32"><ellipse cx="16" cy="28.5" rx="8" ry="2.2" fill="rgba(0,0,0,.2)"/>
<path d="M10 14.5Q16 18.5 22 15.5Q16 16 10 18.5Q16 22.5 22 19.5Q16 20 10 22.5Q16 26.5 22 23.5Q16 24 10.5 26.5Q16 29.5 20.5 27.5" stroke="#555" stroke-width="2.3" fill="none" stroke-linejoin="round"/>
<path d="M10 14.5Q16 18.5 22 15.5Q16 16 10 18.5Q16 22.5 22 19.5Q16 20 10 22.5Q16 26.5 22 23.5Q16 24 10.5 26.5Q16 29.5 20.5 27.5" stroke="#e4e4e4" stroke-width=".9" fill="none" stroke-linejoin="round"/>
<path d="M4 3.8h24l3 9.6H1z" fill="#f7f7f7" stroke="#8a8a8a" stroke-width=".9"/>
<path d="M2 12.2h28" stroke="#e02828" stroke-width="1.6" stroke-dasharray="1.8 1.7"/>
<path d="M4.5 5.5h23" stroke="#f2caca" stroke-width=".9" stroke-dasharray="1.8 1.7"/></svg><div class="rt">Custom Application Launcher</div><div class="rd">Create a new launcher</div></div>
<div class="row" style="top:42px"><svg class="ric" width="32" height="32" viewBox="0 0 32 32"><ellipse cx="16" cy="28.5" rx="8" ry="2.2" fill="rgba(0,0,0,.2)"/>
<path d="M10 14.5Q16 18.5 22 15.5Q16 16 10 18.5Q16 22.5 22 19.5Q16 20 10 22.5Q16 26.5 22 23.5Q16 24 10.5 26.5Q16 29.5 20.5 27.5" stroke="#555" stroke-width="2.3" fill="none" stroke-linejoin="round"/>
<path d="M10 14.5Q16 18.5 22 15.5Q16 16 10 18.5Q16 22.5 22 19.5Q16 20 10 22.5Q16 26.5 22 23.5Q16 24 10.5 26.5Q16 29.5 20.5 27.5" stroke="#e4e4e4" stroke-width=".9" fill="none" stroke-linejoin="round"/>
<path d="M4 3.8h24l3 9.6H1z" fill="#f7f7f7" stroke="#8a8a8a" stroke-width=".9"/>
<path d="M2 12.2h28" stroke="#e02828" stroke-width="1.6" stroke-dasharray="1.8 1.7"/>
<path d="M4.5 5.5h23" stroke="#f2caca" stroke-width=".9" stroke-dasharray="1.8 1.7"/><path d="M2 2.5q2-2 4 0M2.5 1q1.5-1.2 3 0M26 2.5q2-2 4 0M26.5 1q1.5-1.2 3 0" stroke="#5e9ad6" stroke-width=".9" fill="none"/></svg><div class="rt">Application Launcher...</div><div class="rd">Copy a launcher from the applications menu</div></div>
<div class="sep" style="top:86px;left:1px;width:42px"></div><div class="sep" style="top:86px;left:45px;width:472px"></div>
<div class="row" style="top:88px"><svg class="ric" width="32" height="32" viewBox="0 0 32 32"><rect x="2.5" y="3.5" width="27" height="26" rx="4" fill="#7d7d7b"/>
<rect x="2.5" y="2.5" width="27" height="25.5" rx="4" fill="url(#gkey2)" stroke="#6e6e6c"/>
<rect x="6" y="5.5" width="20" height="17" rx="2" fill="#dededc" stroke="#b5b5b3" stroke-width=".8"/>
<text x="18" y="20" font-size="15" text-anchor="middle" fill="#3a3a3a" font-family="Liberation Sans">à</text></svg><div class="rt">Character Palette</div><div class="rd">Insert characters</div></div>
<div class="row" style="top:130px"><svg class="ric" width="32" height="32" viewBox="0 0 32 32"><circle cx="16" cy="16" r="14" fill="#4d4d4b"/>
<circle cx="16" cy="16" r="11.5" fill="url(#gkey)"/>
<circle cx="16" cy="16" r="10.3" fill="#f3f3f1"/>
<path d="M16 16L21.5 9.5L17.2 17.2ZM16 16L12.5 18L14.8 14.8Z" fill="#1a1a1a" stroke="#1a1a1a" stroke-width="1.2" stroke-linejoin="round"/></svg><div class="rt">Clock</div><div class="rd">Get the current time and date</div></div>
<div class="row" style="top:172px"><svg class="ric" width="32" height="32" viewBox="0 0 32 32"><path d="M30 5.5H2.5V27.5H30" fill="#fff" stroke="#555" stroke-width="1"/>
<path d="M11.5 9v15M9 9h5M9 24h5" stroke="#666" stroke-width="1.1" fill="none"/></svg><div class="rt">Command Line</div><div class="rd">Mini-Commander</div></div>
<div class="row" style="top:214px"><svg class="ric" width="32" height="32" viewBox="0 0 32 32"><ellipse cx="16" cy="29.5" rx="10" ry="2" fill="rgba(0,0,0,.12)"/>
<circle cx="15.5" cy="15.3" r="14" fill="url(#gglobe)" stroke="#2c5692" stroke-width="1"/>
<path d="M5 7c2-3 5-5 9-5.5 1 1.5-1 3-3 3.5 2 1 4 .5 5.5 2-1 2-4 1.5-5.5 3-2 0-3 2-4.5 1.5C6 10 5.5 8.5 5 7z" fill="#e9edf0"/>
<path d="M17 3c3 0 7 1.5 9.5 4.5-1 1-3 .5-4 1.5 1.5 1 3.5 1 4.5 2.5-.5 2-3 2-4 3.5-1 2 1 4-.5 6-1.5 2-3 3-4 5-1-1.5-1.5-4-2.5-6-1-1.5-3-2-3-4 0-1.5 1.5-2.5 3-3 1-.5 2.5 0 3-1-1-1-3-.5-3.5-2 .5-1.5 2-2.5 1.5-4z" fill="#e6eaee"/>
<path d="M3 17c1.5 0 3 1 4.5 2 1 1.5.5 3.5 1.5 5-1 .5-2 0-3-.5C4.5 21.5 3.3 19.5 3 17z" fill="#dfe4e8"/>
<ellipse cx="11" cy="8" rx="8" ry="5" fill="rgba(255,255,255,.22)"/></svg><div class="rt">Connect to Server...</div><div class="rd">Connect to a remote computer or shared disk</div></div>
<div class="row" style="top:256px"><svg class="ric" width="32" height="32" viewBox="0 0 32 32"><g fill="#f0d000" stroke="#a08800" stroke-width=".6">
<rect x="6" y="0.5" width="2.6" height="2.6"/><rect x="10.2" y="0.5" width="2.6" height="2.6"/><rect x="14.4" y="0.5" width="2.6" height="2.6"/><rect x="18.6" y="0.5" width="2.6" height="2.6"/><rect x="22.8" y="0.5" width="2.6" height="2.6"/>
<rect x="6" y="26" width="2.6" height="2.6"/><rect x="10.2" y="26" width="2.6" height="2.6"/><rect x="14.4" y="26" width="2.6" height="2.6"/><rect x="18.6" y="26" width="2.6" height="2.6"/><rect x="22.8" y="26" width="2.6" height="2.6"/>
<rect x="1" y="5.5" width="2.6" height="2.6"/><rect x="1" y="9.7" width="2.6" height="2.6"/><rect x="1" y="13.9" width="2.6" height="2.6"/><rect x="1" y="18.1" width="2.6" height="2.6"/><rect x="1" y="22.3" width="2.6" height="2.6"/>
<rect x="28" y="5.5" width="2.6" height="2.6"/><rect x="28" y="9.7" width="2.6" height="2.6"/><rect x="28" y="13.9" width="2.6" height="2.6"/><rect x="28" y="18.1" width="2.6" height="2.6"/><rect x="28" y="22.3" width="2.6" height="2.6"/>
</g>
<rect x="3.5" y="3" width="25" height="23.5" fill="#6b6b69" stroke="#3a3a38" stroke-width=".8"/>
<circle cx="16" cy="14.8" r="9.3" fill="#fafafa" stroke="#9a9a98" stroke-width=".8"/>
<path d="M16 7v1.5M9 14.8h1.5M22.5 14.8H21M11 9.8l1 1M21 9.8l-1 1M11 19.8l1-1" stroke="#444" stroke-width=".8"/>
<path d="M19.5 11.5l2.5 6.5c-1 1-2.5 1-3-.5z" fill="#c81414"/>
<path d="M16 15l4.5-4.5" stroke="#111" stroke-width="1.6"/>
<circle cx="16" cy="15" r="1.3" fill="#111"/></svg><div class="rt">CPU Frequency Scaling Monitor</div><div class="rd">Monitor the CPU Frequency Scaling</div></div>
<div class="row" style="top:298px"><svg class="ric" width="32" height="32" viewBox="0 0 32 32"><path d="M1.5 25.5l1.5-15c4-2 9-1.5 13 1 4-2.5 9-3 13-1l1.5 15c-4.5-1.5-10-1-14.5 1.5-4.5-2.5-10-3-14.5-1.5z" fill="#4a3848"/>
<path d="M3 23.5L4 8c4-2.5 8.5-2.5 12 0 3.5-2.5 8-2.5 12 0l1 15.5c-4-1.5-9-1-13 1.5-4-2.5-9-3-13-1.5z" fill="url(#gpage)" stroke="#8a8088" stroke-width=".6"/>
<path d="M16 8v17" stroke="#b0a8ae" stroke-width=".8"/>
<path d="M18.5 6.5c0 5 2 8 3 12 .5 2 0 4 1 6.5" stroke="#b41818" stroke-width="1.8" fill="none"/></svg><div class="rt">Dictionary Look up</div><div class="rd">Look up words in a dictionary</div></div>
<div class="row" style="top:340px"><svg class="ric" width="32" height="32" viewBox="0 0 32 32"><rect x="3" y="3" width="26" height="26" rx="2" fill="#3c3c3c" stroke="#222"/>
<rect x="6" y="3.5" width="20" height="12" fill="#f2f2f2"/>
<path d="M6 4.5h20" stroke="#6aa0e0" stroke-width="2"/>
<path d="M8 8.5h16M8 11.5h16" stroke="#aaa" stroke-width=".8"/>
<rect x="9" y="19" width="14" height="10" fill="#c8c8c8"/>
<rect x="11" y="21" width="3" height="6" fill="#555"/></svg><div class="rt">Disk Mounter</div><div class="rd">Mount local disks and devices</div></div>
<div class="row" style="top:382px"><svg class="ric" width="32" height="32" viewBox="0 0 32 32"></svg><div class="rt">Drawer</div><div class="rd">A pop out drawer to store other items in</div></div>
  </div>
  <div class="vsb" style="left:536px;top:68px;height:393px"><div class="sb-up2"><svg width="13" height="13" viewBox="0 0 13 13"><path d="M3.5 8l3-3 3 3" stroke="#888" stroke-width="1.3" fill="none"/></svg></div><div class="sb-thumb2" style="top:14px;height:120px"><div class="grip" style="top:40px"></div></div><div class="sb-dn2"><svg width="13" height="13" viewBox="0 0 13 13"><path d="M3.5 5l3 3 3-3" stroke="#333" stroke-width="1.5" fill="none"/></svg></div></div>
  <div class="btn" style="left:16px;top:473px;width:83px">Help</div>
  <div class="btn dis" style="left:285px;top:473px;width:83px">Back</div>
  <div class="btn def" style="left:376px;top:473px;width:83px">Add</div>
  <div class="btn" style="left:467px;top:473px;width:83px">Close</div>
</div>
<div id="cl" class="win active" style="left:481px;top:218px;width:441px;height:225px">
  <div class="wtitle"><div class="wicon"></div><div class="wtext">Create Launcher</div><div class="wclose" style="left:416px"><svg width="16" height="16" viewBox="0 0 16 16"><path d="M4 4l8 8M12 4l-8 8" stroke="#fff" stroke-width="2.4"/></svg></div></div>
  <div class="iconbtn" style="left:16px;top:38px;width:58px;height:57px">
    <svg width="56" height="55" viewBox="0 0 56 55" style="position:absolute;left:0;top:0">
      <ellipse cx="30" cy="40" rx="17" ry="6" fill="rgba(0,0,0,.13)"/>
      <path d="M5.5 31.5 C5 21 16 13 28 13 C40 13 49.5 19 50 29.5" stroke="#3a6cb5" stroke-width="4.5" fill="none"/>
      <path d="M43.5 34.5L52.5 36L51.5 41.5L44.5 38.5Z" fill="#d41414"/>
      <g transform="translate(-5.5 0)"><path d="M15.5 20.5C15.5 14.5 22 11 29.5 11C34 11 38 12 40.5 13.5L44 12.5L44.2 18C44.5 19 44.7 20 44.7 21L45 37C45 41 38.5 44 30.5 44S16 41 16 37Z" fill="url(#gknob)" stroke="#3a3a38" stroke-width="1.1"/>
      <ellipse cx="29.5" cy="19" rx="13.5" ry="7" fill="#f3f3ef"/></g>
    </svg>
  </div>
  <div class="lbl b" style="right:270px;top:42px">Type:</div>
  <div class="lbl b" style="right:270px;top:77px">Name:</div>
  <div class="lbl b" style="right:270px;top:111px">Command:</div>
  <div class="lbl b" style="right:270px;top:145px">Comment:</div>
  <div class="combo" style="left:181px;top:36px;width:242px;height:28px">Application in Terminal<div class="csep"></div><svg width="12" height="16" viewBox="0 0 12 16" style="position:absolute;left:223px;top:5px"><path d="M2.5 6.5l3.5-3.5 3.5 3.5M2.5 9.5l3.5 3.5 3.5-3.5" stroke="#333" stroke-width="1.5" fill="none"/></svg></div>
  <div class="entry" style="left:181px;top:73px;width:242px;height:25px">Mixer</div>
  <div class="entry" style="left:181px;top:107px;width:158px;height:25px">alsamixer</div>
  <div class="btn" style="left:353px;top:106px;width:70px;height:27px">Browse...</div>
  <div class="entry" style="left:181px;top:141px;width:242px;height:25px">Volume Control</div>
  <div class="btn" style="left:16px;top:180px;width:83px">Help</div>
  <div class="btn" style="left:249px;top:180px;width:83px">Cancel</div>
  <div class="btn" style="left:340px;top:180px;width:83px">OK</div>
</div>
<svg class="abs" style="left:952px;top:620px" width="16" height="22" viewBox="-2 -2 16 22">
<path d="M0 0L0 17L4 13.3L6.6 18.3L9.2 17.2L6.8 12.4L12 12.2Z" fill="#1a1a1a" stroke="#fff" stroke-width="1.1" stroke-linejoin="round"/>
</svg>
<div id="botpanel">
  <div class="handle" style="left:3px;top:4px"></div>
  <div class="task" style="left:12px;width:198px"><div class="ticon termico"></div><span style="left:31px">x@localhost:~</span></div>
  <div class="task" style="left:213px;width:198px"><div class="ticon wico"></div><span style="left:31px">Add to Panel</span></div>
  <div class="task act" style="left:414px;width:199px"><div class="ticon wico"></div><span style="left:31px">Create Launcher</span></div>
  <div class="abs" style="left:935px;top:1px;width:54px;height:21px;border-radius:3px;background:#aaa8a4;overflow:hidden">
    <div class="abs" style="left:0;top:0;width:27px;height:21px;background:#4e77ad"></div>
    <div class="abs" style="left:7px;top:8px;width:20px;height:14px;background:#86abdc;border:1px solid #f2f6fb"></div>
    <div class="abs" style="left:4px;top:3px;width:14px;height:12px;background:#8fb2e2;border:1px solid #f2f6fb"></div>
    <div class="abs" style="left:12px;top:7px;width:11px;height:6px;background:#c2d6f0;border:1px solid #f2f6fb"></div>
  </div>
  <svg class="abs" style="left:1000px;top:0px" width="22" height="24" viewBox="0 0 22 24">
    <defs><pattern id="mesh" width="2" height="2" patternUnits="userSpaceOnUse"><rect width="2" height="2" fill="#c9cbcd"/><rect width="1" height="1" fill="#85888c"/><rect x="1" y="1" width="1" height="1" fill="#a0a3a6"/></pattern></defs>
    <path d="M1.5 5.5l1.5 14c.3 1.8 3.5 2.8 8 2.8s7.7-1 8-2.8l1.5-14z" fill="url(#mesh)" stroke="#555" stroke-width=".9"/>
    <path d="M2.5 7.5c2 1.2 15 1.2 17 0" stroke="#ddd" stroke-width="1.2" fill="none"/>
    <ellipse cx="11" cy="5" rx="9.5" ry="2.8" fill="#8a8c8e" stroke="#333" stroke-width=".9"/>
    <ellipse cx="11" cy="5" rx="8" ry="2" fill="#aeb0b2"/>
  </svg>
</div>
</body></html>
